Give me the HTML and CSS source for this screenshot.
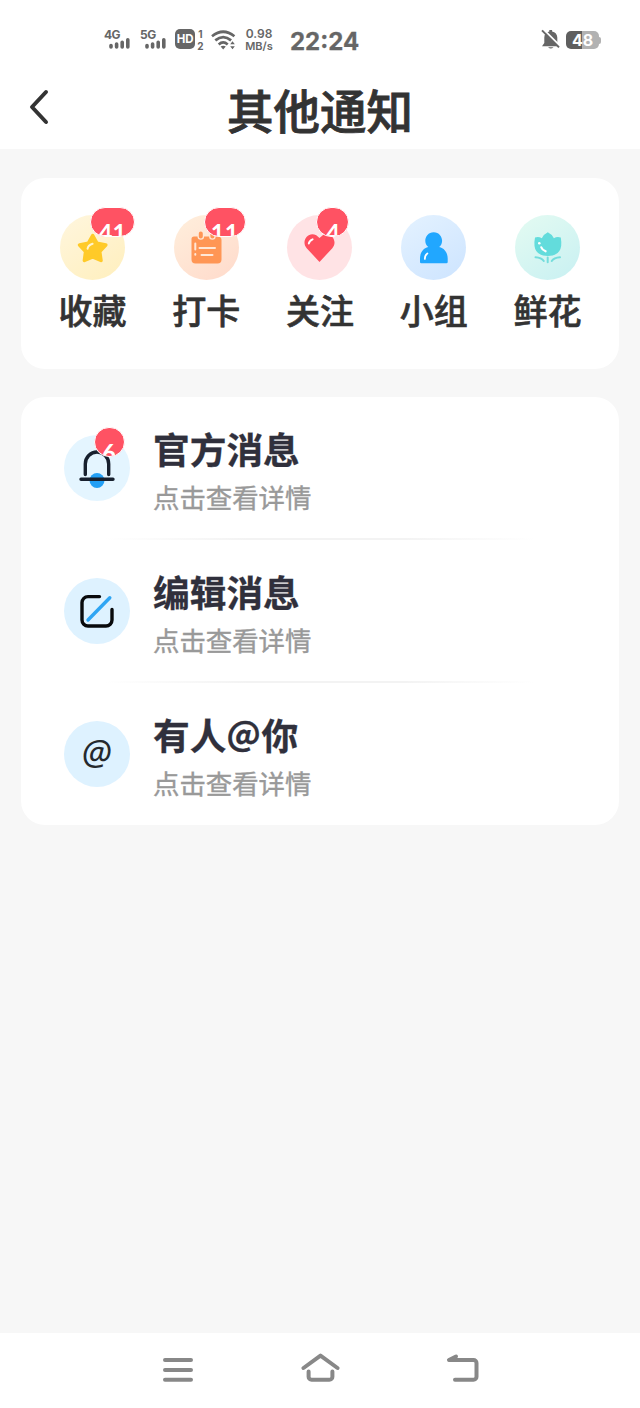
FILE: index.html
```html
<!DOCTYPE html>
<html lang="zh-CN">
<head>
<meta charset="utf-8">
<title>其他通知</title>
<link rel="stylesheet" href="styles.css">
</head>
<body>
<div class="screen">
  <div class="status">
    <div class="signal">
      <span class="net">4G</span>
      <svg class="bars" width="22" height="11" viewBox="0 0 22 11"><path d="M2 7.500v1.500M7.600 6v3M13.200 4.200v4.800M18.800 1.800v7.200"/></svg>
    </div>
    <div class="signal">
      <span class="net">5G</span>
      <svg class="bars" width="22" height="11" viewBox="0 0 22 11"><path d="M2 7.500v1.500M7.600 6v3M13.200 4.200v4.800M18.800 1.800v7.200"/></svg>
    </div>
    <div class="hd"><span class="hd-box">HD</span><span class="sims"><span>1</span><span>2</span></span></div>
    <svg class="wifi" width="26" height="20" viewBox="0 0 26 20">
      <g fill="none" stroke="#666" stroke-width="2.700"><path d="M1 6.200Q12.200-2.700 23.400 6.200"/><path d="M4.300 10.400Q12.200 3.700 20.100 10.400"/><path d="M7.700 14.400Q12.200 10.500 16.700 14.400"/></g>
      <path d="M9.600 16.600Q12.200 14.800 14.800 16.600L12.200 19.500zM19.200 14.300l2.300-3 2.300 3zM19.200 16.300l2.300 3 2.300-3z" fill="#666"/>
    </svg>
    <div class="speed"><span>0.98</span><span>MB/s</span></div>
    <div class="time">22:24</div>
    <svg class="mute" width="20" height="21" viewBox="0 0 20 21">
      <path d="M1 17.300L3.300 14V8.500C3.300 5 5.200 3 8.300 2.400V1h2.800v1.400C14.300 3 16.300 5.400 16.300 8.500V14l2.300 3.300zM7 18.200h5.500q-2.700 2.600-5.500 0z" fill="#666"/>
      <path d="M2.400.4L19.400 17.400" stroke="#fff" stroke-width="2"/><path d="M1 1.400L18 18.400" stroke="#666" stroke-width="2"/>
    </svg>
    <div class="battery"><span class="level">48</span><i class="tip"></i></div>
  </div>

  <header class="header">
    <svg class="back" width="20" height="36" viewBox="0 0 20 36"><path d="M17 3L3 18L17 33"/></svg>
    <h1>其他通知</h1>
  </header>

  <main class="content">
    <section class="card shortcuts">
      <div class="shortcut">
        <div class="disc star"><svg width="65" height="65" viewBox="0 0 65 65">
          <path d="M32.700 20.500L37 28.300L45.800 30L39.700 36.500L41 45.500L32.700 41.800L24.400 45.500L25.600 36.500L19.600 30L28.300 28.300Z" fill="#ffca28" stroke="#ffca28" stroke-width="3.500" stroke-linejoin="round"/>
          <path d="M27.600 33.700q.3-3.500 5-5" fill="none" stroke="#fff4cf" stroke-width="2" stroke-linecap="round"/></svg>
          <span class="badge b-two">41</span></div>
        <span class="label">收藏</span>
      </div>
      <div class="shortcut">
        <div class="disc calendar"><svg width="65" height="65" viewBox="0 0 65 65">
          <path d="M20 21.500h3.500a3.300 3.300 0 0 0 6.600 0h5a3.300 3.300 0 0 0 6.600 0H44a3.500 3.500 0 0 1 3.500 3.500v19.500a4 4 0 0 1-4 4h-22a4 4 0 0 1-4-4V24a2.500 2.500 0 0 1 2.500-2.500z" fill="#ff9655"/>
          <path d="M26.800 18.500v3M38.400 18.500v3" stroke="#ff9655" stroke-width="4" stroke-linecap="round"/>
          <path d="M21.300 28.500v6M21.300 39v.8M25.500 33h15.500M27.500 40h11" stroke="#ffe7d7" stroke-width="2" stroke-linecap="round"/></svg>
          <span class="badge b-eleven">11</span></div>
        <span class="label">打卡</span>
      </div>
      <div class="shortcut">
        <div class="disc heart"><svg width="65" height="65" viewBox="0 0 65 65">
          <path d="M32.500 47L19.700 33.200C13.500 26 21.500 15.700 29.300 20.300L32.500 23L35.700 20.300C43.500 15.700 51.500 26 45.300 33.200Z" fill="#ff4f5e"/>
          <path d="M21.800 28.500q.6-3 3.800-4.200" fill="none" stroke="#fff" stroke-width="1.900" stroke-linecap="round"/></svg>
          <span class="badge b-one">4</span></div>
        <span class="label">关注</span>
      </div>
      <div class="shortcut">
        <div class="disc person"><svg width="65" height="65" viewBox="0 0 65 65">
          <path d="M27.300 32C21.500 27.500 24.500 17.200 32.700 17.200S43.800 27.500 38.200 32C43.500 33 46.700 38 46.700 43.500V47a1.300 1.300 0 0 1-1.300 1.300H20.300A1.300 1.300 0 0 1 19 47V43.500C19 38 22 33 27.300 32Z" fill="#21a7ff"/>
          <path d="M23.900 44q-.3-3.500 2.500-5.500" fill="none" stroke="#fff" stroke-width="1.800" stroke-linecap="round"/></svg></div>
        <span class="label">小组</span>
      </div>
      <div class="shortcut">
        <div class="disc flower"><svg width="65" height="65" viewBox="0 0 65 65">
          <path d="M20 22.500Q23.500 21 26.800 23.300Q28.600 19.300 32.800 17.300Q37 19.300 38.900 23.300Q42 21 45.800 22.500Q49 41 32.900 41Q16.500 41 20 22.500Z" fill="#63dcdc"/>
          <path d="M20.500 42.200q6 .3 8.300 3.800M45 42.200q-6 .3-8.300 3.800M32.700 42.500v4.800" fill="none" stroke="#74dddc" stroke-width="2" stroke-linecap="round"/>
          <circle cx="24.300" cy="28.300" r="1.300" fill="#fff"/><path d="M26.300 32.300q1 2.600 4.300 4" fill="none" stroke="#fff" stroke-width="2.200" stroke-linecap="round"/></svg></div>
        <span class="label">鲜花</span>
      </div>
    </section>

    <section class="card messages">
      <div class="row">
        <div class="round bell"><svg width="66" height="66" viewBox="0 0 66 66">
          <circle cx="33" cy="45.500" r="7.500" fill="#229ff5"/>
          <path d="M21.300 39.500V29a11.700 12 0 0 1 23.400 0v10.500M17 44.200h32" fill="none" stroke="#17202e" stroke-width="3.400" stroke-linecap="round"/></svg>
          <span class="badge b-row">6</span></div>
        <div class="text"><h2>官方消息</h2><p>点击查看详情</p></div>
      </div>
      <div class="row">
        <div class="round edit"><svg width="66" height="66" viewBox="0 0 66 66" fill="none" stroke-width="3.400" stroke-linecap="round">
          <path d="M35.500 18.600H24a6 6 0 0 0-6 6V42a6 6 0 0 0 6 6H42a6 6 0 0 0 6-6V31.500" stroke="#080a0c"/>
          <path d="M24 42L45.800 19.800" stroke="#2fa5f3"/></svg></div>
        <div class="text"><h2>编辑消息</h2><p>点击查看详情</p></div>
      </div>
      <div class="row">
        <div class="round mention"><span>@</span></div>
        <div class="text"><h2>有人<span class="at">@</span>你</h2><p>点击查看详情</p></div>
      </div>
    </section>
  </main>

  <nav class="nav">
    <svg width="40" height="36" viewBox="0 0 40 36"><path d="M7 8h26M7 18h26M7 27.800h26"/></svg>
    <svg width="40" height="36" viewBox="0 0 40 36"><path d="M3.500 16L20.500 3.600L37.500 16M8.600 19.500v5.300a3 3 0 0 0 3 3h17.800a3 3 0 0 0 3-3V19.500"/></svg>
    <svg width="40" height="36" viewBox="0 0 40 36"><path d="M14 4.500L7 8H31.500a3 3 0 0 1 3 3V24.800a3 3 0 0 1-3 3H13"/></svg>
  </nav>
</div>
</body>
</html>
```

FILE: styles.css
```css
* { box-sizing: border-box; }
body { margin: 0; background: #f7f7f7; font-family: "Noto Sans CJK SC", sans-serif; }
h1, h2, p { margin: 0; }
svg { display: block; flex: none; }
.screen { width: 640px; height: 1408px; display: flex; flex-direction: column; }

.status { height: 72px; flex: none; display: flex; align-items: flex-start; padding: 28px 0 0 104px; background: #fff; color: #666; font-family: Inter, sans-serif; font-weight: 700; }
.signal { width: 36px; height: 22px; display: flex; flex-direction: column; }
.net { font-size: 12px; line-height: 14px; letter-spacing: -.5px; font-weight: 700; }
.bars { margin: -4px 0 0 5px; }
.bars path { stroke: #666; stroke-width: 3.600; stroke-linecap: round; }
.hd { display: flex; width: 38px; }
.hd-box { width: 20px; height: 20px; margin: 1px 0 0 -1px; border-radius: 5px; background: #666; color: #fff; font-size: 11.500px; line-height: 20px; text-align: center; letter-spacing: -.3px; }
.sims { display: flex; flex-direction: column; margin: 0 0 0 2px; width: 7px; align-items: center; font-size: 10px; line-height: 12px; }
.wifi { margin: 2px 0 0 -3px; }
.speed { width: 32px; margin-left: 6px; display: flex; flex-direction: column; align-items: center; font-size: 12px; line-height: 12px; font-weight: 600; }
.speed span + span { font-size: 11px; }
.time { margin-left: 15px; font-size: 24px; line-height: 28px; width: 70px; white-space: nowrap; -webkit-text-stroke: .3px #666; }
.mute { margin: 1px 0 0 181px; }
.battery { display: flex; align-items: center; margin: 3px 0 0 5px; }
.level { width: 33px; height: 18px; border-radius: 5px; background: linear-gradient(90deg, #5f5f5f 48%, #b2b2b2 48%); color: #fff; font-size: 16px; line-height: 18px; text-align: center; }
.tip { width: 2px; height: 7px; background: #b2b2b2; border-radius: 0 2px 2px 0; }

.header { height: 77px; flex: none; display: grid; grid-template-columns: 60px 1fr 60px; align-items: center; background: #fff; }
.back { margin: -7px 0 0 29px; }
.back path { fill: none; stroke: #333; stroke-width: 4; stroke-linecap: round; stroke-linejoin: round; }
.header h1 { text-align: center; font-size: 46.500px; line-height: 60px; margin-top: -4px; font-weight: 500; color: #333; -webkit-text-stroke: .8px #333; }

.content { flex: 1; padding: 29px 21px 0; display: flex; flex-direction: column; gap: 28px; }
.card { background: #fff; border-radius: 24px; }
.shortcuts { height: 191px; padding: 36.500px 14.500px 0 14.500px; display: grid; grid-template-columns: repeat(5, 1fr); align-content: start; }
.shortcut { display: flex; flex-direction: column; align-items: center; }
.disc { position: relative; width: 65px; height: 65px; border-radius: 50%; }
.star { background: linear-gradient(145deg, #fff6de, #ffefbd); }
.calendar { background: linear-gradient(145deg, #ffefdc, #ffdacb); }
.heart { background: #ffe3e5; }
.person { background: linear-gradient(145deg, #e4f2ff, #cde4ff); }
.flower { background: linear-gradient(145deg, #e4fbf2, #c8f0f2); }
.label { font-size: 34px; line-height: 44px; margin-top: 8.500px; font-weight: 500; color: #333; white-space: nowrap; -webkit-text-stroke: .6px #333; }

.badge { position: absolute; height: 30px; border: 1.500px solid #fff; border-radius: 15px; background: #ff5263; color: #fff; overflow: hidden; text-align: center; font: 700 24px/50px Lato, sans-serif; }
.b-two { left: 30px; top: -8px; width: 45px; }
.b-eleven { left: 30px; top: -8px; width: 42px; }
.b-one { left: 29px; top: -8px; width: 33px; }
.b-row { left: 30px; top: -8px; width: 31px; }

.messages { height: 428px; }
.row { height: 143px; display: flex; padding: 37.500px 0 0 42.500px; }
.row:not(:last-child) { background: linear-gradient(90deg, transparent 14%, #f3f3f3 38%, #f3f3f3 64%, transparent 86%) 0 140.500px / 100% 2px no-repeat; }
.round { position: relative; width: 66px; height: 66px; border-radius: 50%; background: #def2ff; flex: none; }
.bell { background: #e4f5ff; }
.mention { display: flex; justify-content: center; align-items: center; color: #25292d; font: italic 35px/40px "Noto Sans", sans-serif; }
.mention span { margin-top: -3px; }
.text { margin: -12px 0 0 23.500px; }
.text h2 { font-size: 36.700px; line-height: 50px; font-weight: 700; color: #30303c; -webkit-text-stroke: .3px #30303c; }
.text p { font-size: 26.400px; line-height: 36px; margin-top: 6px; color: #999; -webkit-text-stroke: .4px #999; }
.at { display: inline-block; font: 700 34px/40px "Noto Sans CJK SC", sans-serif; width: 35px; transform: translateY(-4px); }

.nav { height: 75px; flex: none; background: #fff; display: flex; justify-content: space-between; padding: 19px 158px 0; }
.nav path { fill: none; stroke: #888; stroke-width: 4; stroke-linecap: round; stroke-linejoin: round; }
```
